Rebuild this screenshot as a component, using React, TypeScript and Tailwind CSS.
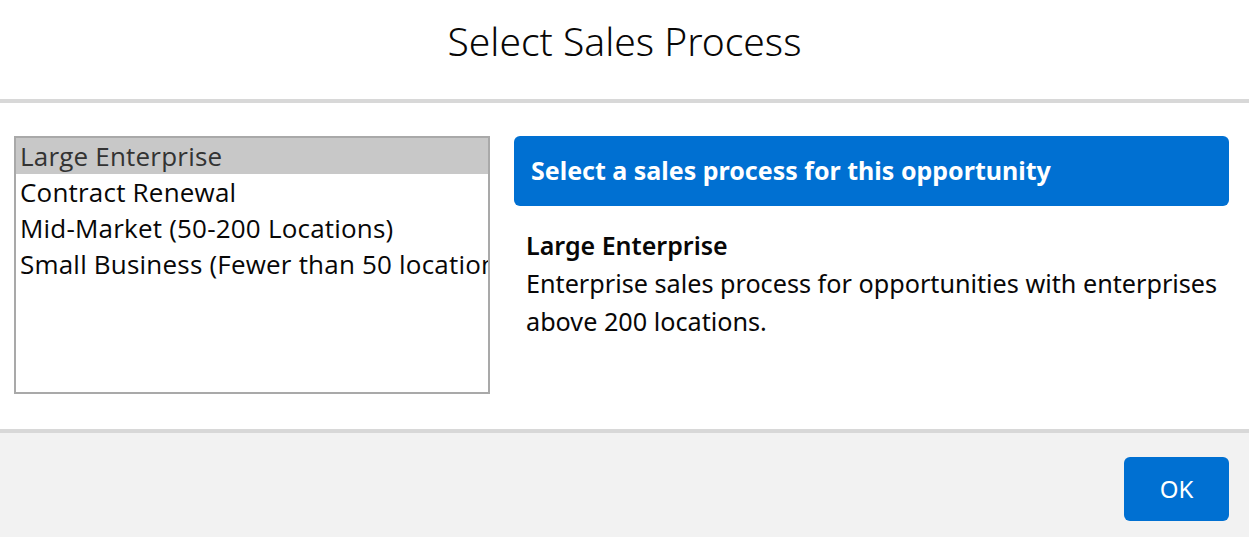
import React from "react";

const options = [
  "Large Enterprise",
  "Contract Renewal",
  "Mid-Market (50-200 Locations)",
  "Small Business (Fewer than 50 locations)",
];

export default function App() {
  const selected = 0;
  return (
    <div className="flex h-[537px] w-[1249px] flex-col bg-white text-[#080707]" style={{ fontFamily: '"Noto Sans", "Open Sans", sans-serif' }}>
      <header className="flex h-[99px] items-center justify-center">
        <h1 className="pb-[16px] text-[39px] font-light text-[#080707]">Select Sales Process</h1>
      </header>
      <div className="h-[4px] bg-[#d8d8d8]" />
      <main className="flex h-[326px] gap-[24px] px-[14px] pt-[33px]">
        <div className="h-[258px] w-[476px] shrink-0 overflow-hidden border-2 border-[#a9a9a9] bg-white" style={{ fontFamily: '"Open Sans", sans-serif' }}>
          {options.map((o, i) => (
            <div key={o} className={`h-[36px] whitespace-nowrap px-[4px] text-[26px] leading-[36px] tracking-[0.2px] ${i === selected ? "bg-[#c8c8c8] text-[#333]" : "text-[#080707]"}`}>
              {o}
            </div>
          ))}
        </div>
        <section className="flex-1 pr-[6px]">
          <div className="flex h-[70px] items-center rounded-[6px] bg-[#0070d2] px-[17px] text-[25px] font-bold text-white">
            Select a sales process for this opportunity
          </div>
          <div className="pl-[12px] pt-[20px]">
            <h2 className="text-[25px] font-semibold leading-[38px]">Large Enterprise</h2>
            <p className="text-[25.2px] leading-[38px]">Enterprise sales process for opportunities with enterprises above 200 locations.</p>
          </div>
        </section>
      </main>
      <div className="h-[4px] bg-[#d8d8d8]" />
      <footer className="flex flex-1 items-start justify-end bg-[#f2f2f2] pr-[20px] pt-[24px]">
        <button className="h-[64px] w-[105px] rounded-[6px] bg-[#0070d2] text-[24px] text-white">OK</button>
      </footer>
    </div>
  );
}
